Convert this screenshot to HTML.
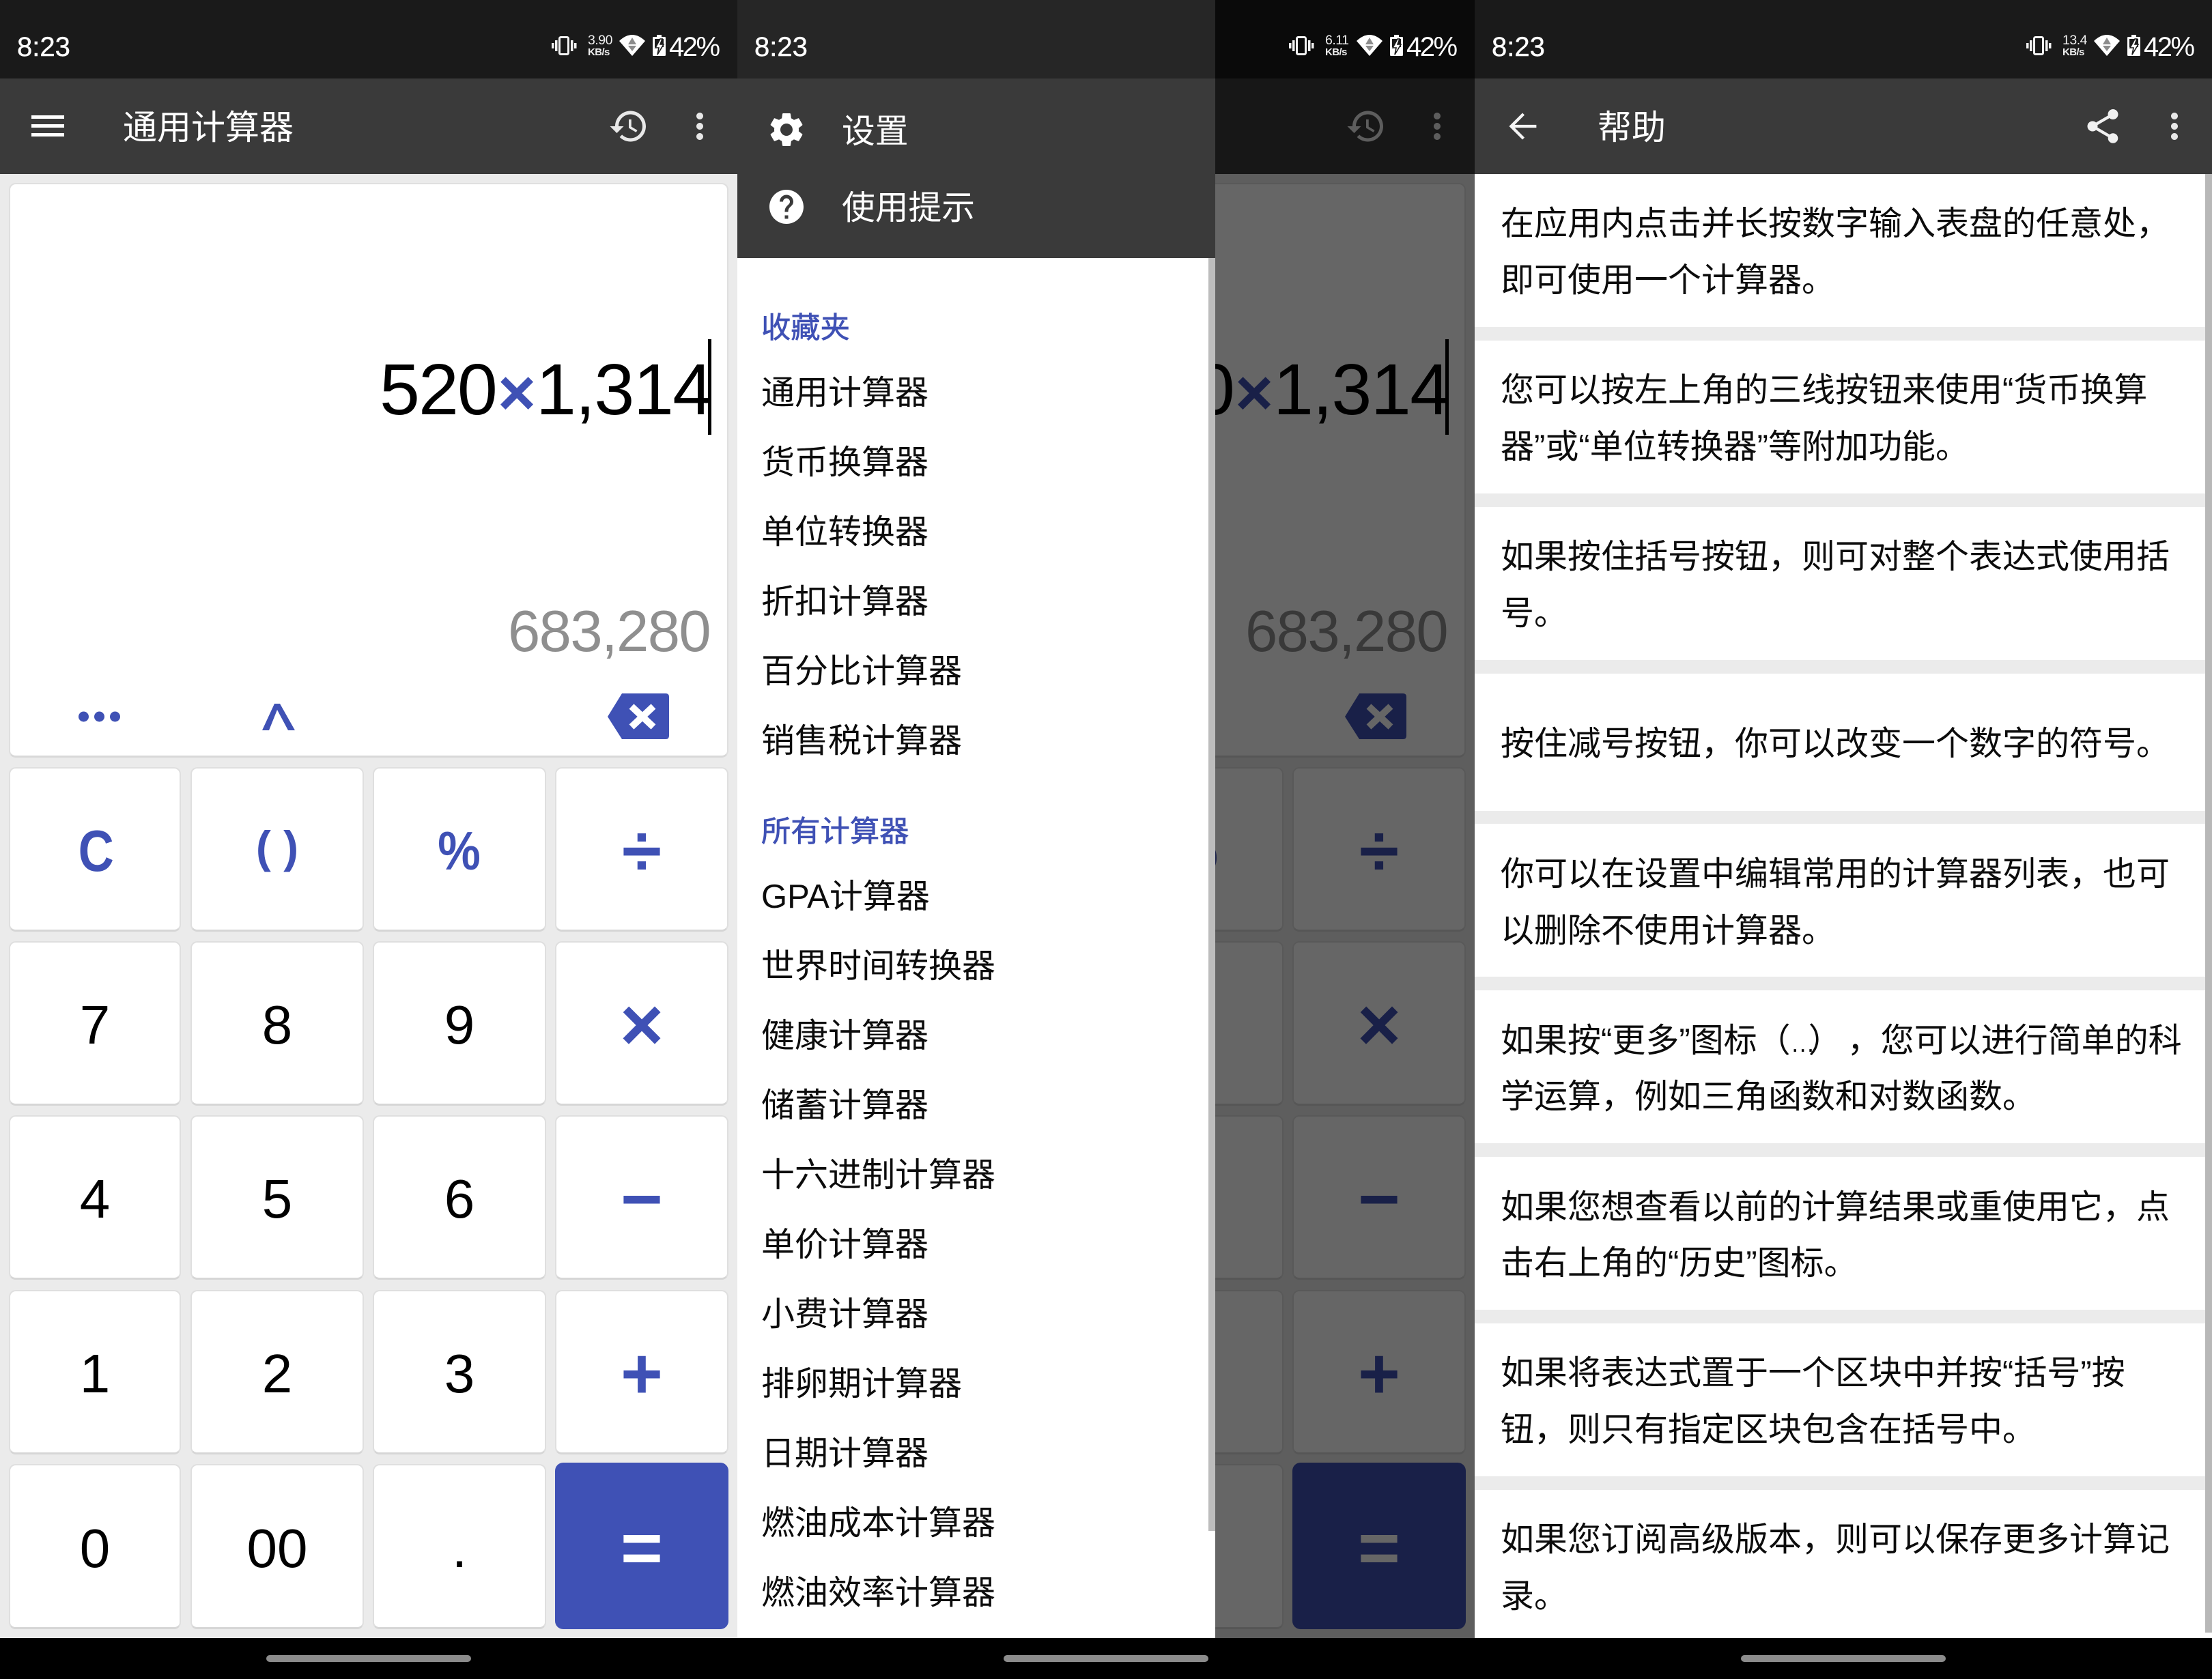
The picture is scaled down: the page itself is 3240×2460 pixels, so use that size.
<!DOCTYPE html>
<html lang="zh-CN">
<head>
<meta charset="utf-8">
<title>通用计算器</title>
<style>
*{margin:0;padding:0;box-sizing:border-box}
html,body{width:3240px;height:2460px;background:#000;overflow:hidden;font-family:"Liberation Sans","Noto Sans CJK SC",sans-serif;text-spacing-trim:space-all}
.s{position:absolute;top:0;width:1080px;height:2400px;overflow:hidden;background:#ebebeb}
.b{position:absolute}
.t{position:absolute;white-space:nowrap;line-height:1;color:#111}
.st{top:0;left:0;width:1080px;height:115px;background:#1a1a1a}
.tb{top:115px;left:0;width:1080px;height:140px;background:#3a3a3a}
.w{color:#fff}
.tm{-webkit-text-stroke:.4px #fff}
.k{position:absolute;background:#fff;border:2px solid #dfdfdf;border-bottom:3px solid #d6d6d6;border-radius:10px;display:flex;align-items:center;justify-content:center;padding-top:6px;font-size:80px;line-height:1;color:#000}
.c1{left:13px;width:252px}.c2{left:279px;width:254px}.c3{left:546px;width:254px}.c4{left:813px;width:254px}
.r1{top:1124px;height:241px}.r2{top:1379px;height:241px}.r3{top:1634px;height:241px}.r4{top:1890px;height:241px}.r5{top:2145px;height:242px}
.o{color:#3f51b5;font-weight:bold;font-size:106px}
.nav{position:absolute;top:2425px;width:300px;height:10px;border-radius:5px;background:#8c8c8c}
.dr{font-size:49px;left:35px;color:#0c0c0c}
.sec{font-size:43.3px;left:35px;color:#3f51b5;-webkit-text-stroke:.7px #3f51b5}
.h{font-size:49px;left:38px;color:#0c0c0c}
.card{position:absolute;left:0;width:1080px;background:#fff}
</style>
</head>
<body>
<svg width="0" height="0" style="position:absolute">
<defs>
<symbol id="stat" viewBox="780 0 300 115">
<g fill="#f2f2f2">
<rect x="808" y="63" width="3.5" height="8"/><rect x="813" y="59" width="3.5" height="16"/>
<rect x="836" y="59" width="3.5" height="16"/><rect x="841" y="63" width="3.5" height="8"/>
</g>
<rect x="819.5" y="54.5" width="13" height="25" rx="2" fill="none" stroke="#f2f2f2" stroke-width="3"/>
<path d="M907 60Q926 42 945 60L926 82Z" fill="#fff"/>
<path d="M926 55L932 65H920ZM920 67H932L926 75Z" fill="#8c8c8c"/>
<rect x="962" y="51" width="7" height="4" fill="#fff"/>
<rect x="956" y="54" width="19" height="28" rx="1.5" fill="#fff"/>
<rect x="959" y="57" width="13" height="12" fill="#1a1a1a"/>
<path d="M967 57L960 70H965L963 80L972 65H967L970 57Z" fill="#fff" stroke="#1a1a1a" stroke-width="1.6"/>
</symbol>
<symbol id="hist" viewBox="0 0 24 24"><path fill="#e8e8e8" d="M13 3c-4.97 0-9 4.03-9 9H1l3.89 3.89.07.14L9 12H6c0-3.87 3.13-7 7-7s7 3.13 7 7-3.13 7-7 7c-1.93 0-3.68-.79-4.94-2.06l-1.42 1.42C8.27 19.99 10.51 21 13 21c4.97 0 9-4.03 9-9s-4.03-9-9-9zm-1 5v5l4.28 2.54.72-1.21-3.5-2.08V8H12z"/></symbol>
<symbol id="more" viewBox="0 0 24 24"><path fill="#e8e8e8" d="M12 8c1.1 0 2-.9 2-2s-.9-2-2-2-2 .9-2 2 .9 2 2 2zm0 2c-1.1 0-2 .9-2 2s.9 2 2 2 2-.9 2-2-.9-2-2-2zm0 6c-1.1 0-2 .9-2 2s.9 2 2 2 2-.9 2-2-.9-2-2-2z"/></symbol>
</defs>
</svg>

<!-- SCREEN 1 -->
<div class="s" style="left:0">
<div class="b st"></div>
<div class="t w tm" style="left:25px;top:49px;font-size:40px">8:23</div>
<svg class="b" style="left:780px;top:0" width="300" height="115"><use href="#stat"/></svg>
<div class="t" style="left:861px;top:49.5px;font-size:19.5px;color:#eee;letter-spacing:-.5px">3.90</div>
<div class="t" style="left:861px;top:69.3px;font-size:15px;font-weight:bold;color:#eee;letter-spacing:-.6px">KB/s</div>
<div class="t w" style="left:980px;top:49px;font-size:40px;letter-spacing:-2.5px">42%</div>
<div class="b tb"></div>
<div class="b" style="left:46px;top:169px;width:48px;height:5px;background:#fff"></div>
<div class="b" style="left:46px;top:182px;width:48px;height:5px;background:#fff"></div>
<div class="b" style="left:46px;top:195px;width:48px;height:5px;background:#fff"></div>
<div class="t w" style="left:180px;top:162px;font-size:50px">通用计算器</div>
<svg class="b" style="left:890.5px;top:154.5px" width="60" height="60"><use href="#hist"/></svg>
<svg class="b" style="left:995px;top:155px" width="60" height="60"><use href="#more"/></svg>

<div class="b" style="left:13px;top:268px;width:1054px;height:842px;background:#fff;border:2px solid #dfdfdf;border-bottom:3px solid #d8d8d8;border-radius:10px"></div>
<div class="t" style="left:556px;top:518px;font-size:106px;color:#000;letter-spacing:-2px">520</div>
<div class="t" style="left:707px;top:528px;width:100px;text-align:center;font-size:96px;font-weight:bold;color:#3f51b5">×</div>
<div class="t" style="left:785px;top:518px;font-size:106px;color:#000;letter-spacing:-1.5px">1,314</div>
<div class="b" style="left:1037px;top:497px;width:5px;height:140px;background:#000"></div>
<div class="t" style="left:744px;top:883px;font-size:85px;color:#8f8f8f;letter-spacing:-1.6px">683,280</div>
<svg class="b" style="left:100px;top:1010px" width="900" height="80">
<g fill="#3f51b5"><circle cx="22.5" cy="40" r="7.5"/><circle cx="45.5" cy="40" r="7.5"/><circle cx="68.5" cy="40" r="7.5"/>
<path d="M284 60L302 21H310L332 60H322L306 30L294 60Z"/>
<path d="M790 40L811 6H875Q880 6 880 11V68Q880 73 875 73H811Z"/></g>
<path d="M825 25L857 55M857 25L825 55" stroke="#fff" stroke-width="10" fill="none"/>
</svg>

<div class="k c1 r1 o" style="font-size:85px"><span style="transform:translateX(2px) scaleX(.85)">C</span></div>
<div class="k c2 r1 o" style="font-size:66px"><span style="transform:translateY(-6px)">( )</span></div>
<div class="k c3 r1 o" style="font-size:80px"><span style="transform:scaleX(.88)">%</span></div>
<div class="k c4 r1 o">÷</div>
<div class="k c1 r2">7</div><div class="k c2 r2">8</div><div class="k c3 r2">9</div><div class="k c4 r2 o" style="font-size:110px">×</div>
<div class="k c1 r3">4</div><div class="k c2 r3">5</div><div class="k c3 r3">6</div><div class="k c4 r3 o">−</div>
<div class="k c1 r4">1</div><div class="k c2 r4">2</div><div class="k c3 r4">3</div><div class="k c4 r4 o">+</div>
<div class="k c1 r5">0</div><div class="k c2 r5">00</div><div class="k c3 r5">.</div>
<div class="k o" style="left:813px;top:2143px;width:254px;height:244px;background:#3f51b5;border:0;color:#fff;border-radius:12px;padding-top:6px">=</div>
</div>

<!-- SCREEN 2 -->
<div class="s" style="left:1080px">
<div class="b st"></div>
<div class="b tb"></div>
<svg class="b" style="left:890.5px;top:154.5px" width="60" height="60"><use href="#hist"/></svg>
<svg class="b" style="left:995px;top:155px" width="60" height="60"><use href="#more"/></svg>
<div class="b" style="left:13px;top:268px;width:1054px;height:842px;background:#fff;border:2px solid #dfdfdf;border-bottom:3px solid #d8d8d8;border-radius:10px"></div>
<div class="t" style="left:556px;top:518px;font-size:106px;color:#000;letter-spacing:-2px">520</div>
<div class="t" style="left:707px;top:528px;width:100px;text-align:center;font-size:96px;font-weight:bold;color:#3f51b5">×</div>
<div class="t" style="left:785px;top:518px;font-size:106px;color:#000;letter-spacing:-1.5px">1,314</div>
<div class="b" style="left:1037px;top:497px;width:5px;height:140px;background:#000"></div>
<div class="t" style="left:744px;top:883px;font-size:85px;color:#8f8f8f;letter-spacing:-1.6px">683,280</div>
<svg class="b" style="left:100px;top:1010px" width="900" height="80">
<path fill="#3f51b5" d="M790 40L811 6H875Q880 6 880 11V68Q880 73 875 73H811Z"/>
<path d="M825 25L857 55M857 25L825 55" stroke="#fff" stroke-width="10" fill="none"/>
</svg>
<div class="k c3 r1 o" style="font-size:80px"><span style="transform:scaleX(.88)">%</span></div>
<div class="k c4 r1 o">÷</div>
<div class="k c3 r2">9</div><div class="k c4 r2 o" style="font-size:110px">×</div>
<div class="k c3 r3">6</div><div class="k c4 r3 o">−</div>
<div class="k c3 r4">3</div><div class="k c4 r4 o">+</div>
<div class="k c3 r5">.</div>
<div class="k o" style="left:813px;top:2143px;width:254px;height:244px;background:#3f51b5;border:0;color:#fff;border-radius:12px;padding-top:6px">=</div>
<div class="b" style="left:0;top:0;width:1080px;height:2400px;background:rgba(0,0,0,.6)"></div>
<svg class="b" style="left:780px;top:0" width="300" height="115"><use href="#stat"/></svg>
<div class="t" style="left:861px;top:49.5px;font-size:19.5px;color:#eee;letter-spacing:-.5px">6.11</div>
<div class="t" style="left:861px;top:69.3px;font-size:15px;font-weight:bold;color:#eee;letter-spacing:-.6px">KB/s</div>
<div class="t w" style="left:980px;top:49px;font-size:40px;letter-spacing:-2.5px">42%</div>

<!-- drawer -->
<div class="b" style="left:0;top:0;width:700px;height:2400px;background:#fff">
<div class="b" style="left:0;top:0;width:700px;height:115px;background:#262626"></div>
<div class="b" style="left:0;top:115px;width:700px;height:263px;background:#3a3a3a"></div>
<div class="t w tm" style="left:25px;top:49px;font-size:40px">8:23</div>
<svg class="b" style="left:42px;top:160px" width="60" height="60" viewBox="0 0 24 24"><path fill="#fff" d="M19.14 12.94c.04-.3.06-.61.06-.94 0-.32-.02-.64-.07-.94l2.03-1.58c.18-.14.23-.41.12-.61l-1.92-3.32c-.12-.22-.37-.29-.59-.22l-2.39.96c-.5-.38-1.03-.7-1.62-.94l-.36-2.54c-.04-.24-.24-.41-.48-.41h-3.84c-.24 0-.43.17-.47.41l-.36 2.54c-.59.24-1.13.57-1.62.94l-2.39-.96c-.22-.08-.47 0-.59.22L2.74 8.87c-.12.21-.08.47.12.61l2.03 1.58c-.05.3-.09.63-.09.94s.02.64.07.94l-2.03 1.58c-.18.14-.23.41-.12.61l1.92 3.32c.12.22.37.29.59.22l2.39-.96c.5.38 1.03.7 1.62.94l.36 2.54c.05.24.24.41.48.41h3.84c.24 0 .44-.17.47-.41l.36-2.54c.59-.24 1.13-.56 1.62-.94l2.39.96c.22.08.47 0 .59-.22l1.92-3.32c.12-.22.07-.47-.12-.61l-2.01-1.58zM12 15.6c-1.98 0-3.6-1.62-3.6-3.6s1.62-3.6 3.6-3.6 3.6 1.62 3.6 3.6-1.62 3.6-3.6 3.6z"/></svg>
<svg class="b" style="left:42px;top:273px" width="60" height="60" viewBox="0 0 24 24"><path fill="#fff" d="M12 2C6.48 2 2 6.48 2 12s4.48 10 10 10 10-4.48 10-10S17.52 2 12 2zm1 17h-2v-2h2v2zm2.07-7.75l-.9.92C13.45 12.9 13 13.5 13 15h-2v-.5c0-1.1.45-2.1 1.17-2.83l1.24-1.26c.37-.36.59-.86.59-1.41 0-1.1-.9-2-2-2s-2 .9-2 2H8c0-2.21 1.79-4 4-4s4 1.79 4 4c0 .88-.36 1.68-.93 2.25z"/></svg>
<div class="t w" style="left:153px;top:169px;font-size:48.75px">设置</div>
<div class="t w" style="left:153px;top:281px;font-size:48.75px">使用提示</div>
<div class="t sec" style="top:460px">收藏夹</div>
<div class="t dr" style="top:552px">通用计算器</div>
<div class="t dr" style="top:654px">货币换算器</div>
<div class="t dr" style="top:756px">单位转换器</div>
<div class="t dr" style="top:858px">折扣计算器</div>
<div class="t dr" style="top:960px">百分比计算器</div>
<div class="t dr" style="top:1062px">销售税计算器</div>
<div class="t sec" style="top:1198px">所有计算器</div>
<div class="t dr" style="top:1290px">GPA计算器</div>
<div class="t dr" style="top:1392px">世界时间转换器</div>
<div class="t dr" style="top:1494px">健康计算器</div>
<div class="t dr" style="top:1596px">储蓄计算器</div>
<div class="t dr" style="top:1698px">十六进制计算器</div>
<div class="t dr" style="top:1800px">单价计算器</div>
<div class="t dr" style="top:1902px">小费计算器</div>
<div class="t dr" style="top:2004px">排卵期计算器</div>
<div class="t dr" style="top:2106px">日期计算器</div>
<div class="t dr" style="top:2208px">燃油成本计算器</div>
<div class="t dr" style="top:2310px">燃油效率计算器</div>
<div class="b" style="left:690px;top:378px;width:10px;height:1865px;background:#bdbdbd"></div>
</div>
</div>

<!-- SCREEN 3 -->
<div class="s" style="left:2160px">
<div class="b st"></div>
<div class="t w tm" style="left:25px;top:49px;font-size:40px">8:23</div>
<svg class="b" style="left:780px;top:0" width="300" height="115"><use href="#stat"/></svg>
<div class="t" style="left:861px;top:49.5px;font-size:19.5px;color:#eee;letter-spacing:-.5px">13.4</div>
<div class="t" style="left:861px;top:69.3px;font-size:15px;font-weight:bold;color:#eee;letter-spacing:-.6px">KB/s</div>
<div class="t w" style="left:980px;top:49px;font-size:40px;letter-spacing:-2.5px">42%</div>
<div class="b tb"></div>
<svg class="b" style="left:40px;top:155px" width="60" height="60" viewBox="0 0 24 24"><path fill="#f4f4f4" stroke="#f4f4f4" stroke-width=".3" d="M20 11.3H7.1l5.9-5.9L12 4.4 4.4 12l7.6 7.6 1-1-5.9-5.9H20z"/></svg>
<div class="t w" style="left:180px;top:162px;font-size:50px">帮助</div>
<svg class="b" style="left:889.5px;top:155px" width="60" height="60" viewBox="0 0 24 24"><path fill="#f0f0f0" d="M18 16.08c-.76 0-1.44.3-1.96.77L8.91 12.7c.05-.23.09-.46.09-.7s-.04-.47-.09-.7l7.05-4.11c.54.5 1.25.81 2.04.81 1.66 0 3-1.34 3-3s-1.34-3-3-3-3 1.34-3 3c0 .24.04.47.09.7L8.04 9.81C7.5 9.31 6.79 9 6 9c-1.66 0-3 1.34-3 3s1.34 3 3 3c.79 0 1.5-.31 2.04-.81l7.12 4.16c-.05.21-.08.43-.08.65 0 1.61 1.31 2.92 2.92 2.92 1.61 0 2.92-1.31 2.92-2.92s-1.31-2.92-2.92-2.92z"/></svg>
<svg class="b" style="left:995px;top:155px" width="60" height="60"><use href="#more"/></svg>

<div class="card" style="top:255px;height:224px"></div>
<div class="card" style="top:499px;height:224px"></div>
<div class="card" style="top:743px;height:224px"></div>
<div class="card" style="top:987px;height:201px"></div>
<div class="card" style="top:1207px;height:224px"></div>
<div class="card" style="top:1451px;height:224px"></div>
<div class="card" style="top:1695px;height:224px"></div>
<div class="card" style="top:1939px;height:224px"></div>
<div class="card" style="top:2183px;height:217px"></div>

<div class="t h" style="top:304px">在应用内点击并长按数字输入表盘的任意处，</div>
<div class="t h" style="top:387px">即可使用一个计算器。</div>
<div class="t h" style="top:548px">您可以按左上角的三线按钮来使用“货币换算</div>
<div class="t h" style="top:631px">器”或“单位转换器”等附加功能。</div>
<div class="t h" style="top:792px">如果按住括号按钮，则可对整个表达式使用括</div>
<div class="t h" style="top:875px">号。</div>
<div class="t h" style="top:1066px">按住减号按钮，你可以改变一个数字的符号。</div>
<div class="t h" style="top:1257px">你可以在设置中编辑常用的计算器列表，也可</div>
<div class="t h" style="top:1340px">以删除不使用计算器。</div>
<div class="t h" style="top:1501px">如果按“更多”图标（<span style="font-size:36px;letter-spacing:-10px">…</span>）<span style="margin-left:8px">，</span>您可以进行简单的科</div>
<div class="t h" style="top:1583px">学运算，例如三角函数和对数函数。</div>
<div class="t h" style="top:1745px">如果您想查看以前的计算结果或重使用它，点</div>
<div class="t h" style="top:1827px">击右上角的“历史”图标。</div>
<div class="t h" style="top:1988px">如果将表达式置于一个区块中并按“括号”按</div>
<div class="t h" style="top:2071px">钮，则只有指定区块包含在括号中。</div>
<div class="t h" style="top:2232px">如果您订阅高级版本，则可以保存更多计算记</div>
<div class="t h" style="top:2315px">录。</div>
<div class="b" style="left:1070px;top:255px;width:10px;height:2137px;background:#b8b8b8"></div>
</div>

<div class="nav" style="left:390px"></div>
<div class="nav" style="left:1470px"></div>
<div class="nav" style="left:2550px"></div>
</body>
</html>
